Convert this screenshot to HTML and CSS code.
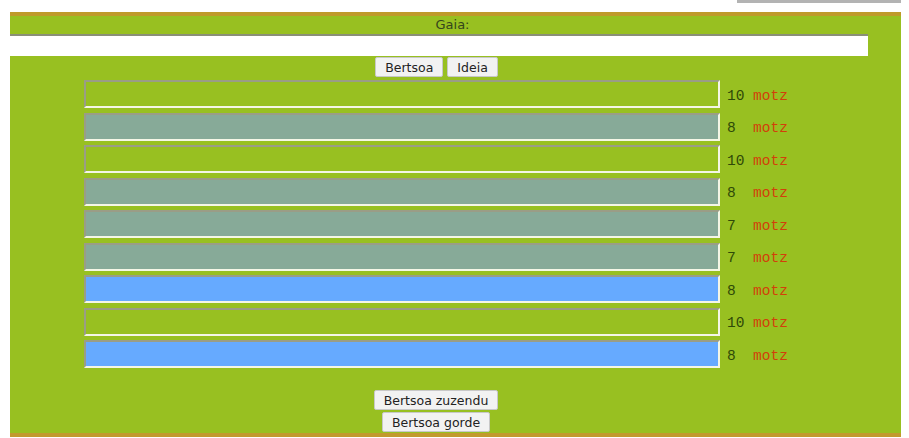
FILE: index.html
```html
<!DOCTYPE html>
<html lang="eu">
<head>
  <meta charset="UTF-8">
  <meta name="viewport" content="width=device-width, initial-scale=1.0">
  <title>Bertsoa</title>
  <link rel="stylesheet" href="styles.css">
</head>
<body>
  <div class="topbar"></div>
  <div class="panel">
    <div class="gaia-label">Gaia:</div>
    <input class="gaia" type="text">
    <div class="tools">
      <button>Bertsoa</button>
      <button>Ideia</button>
    </div>

    <div class="lines">
      <div class="line"><input class="verse" type="text"><span class="count">10 </span><span class="kind">motz</span></div>
      <div class="line"><input class="verse gray" type="text"><span class="count">8  </span><span class="kind">motz</span></div>
      <div class="line"><input class="verse" type="text"><span class="count">10 </span><span class="kind">motz</span></div>
      <div class="line"><input class="verse gray" type="text"><span class="count">8  </span><span class="kind">motz</span></div>
      <div class="line"><input class="verse gray" type="text"><span class="count">7  </span><span class="kind">motz</span></div>
      <div class="line"><input class="verse gray" type="text"><span class="count">7  </span><span class="kind">motz</span></div>
      <div class="line"><input class="verse blue" type="text"><span class="count">8  </span><span class="kind">motz</span></div>
      <div class="line"><input class="verse" type="text"><span class="count">10 </span><span class="kind">motz</span></div>
      <div class="line"><input class="verse blue" type="text"><span class="count">8  </span><span class="kind">motz</span></div>
    </div>

    <div class="actions">
      <button>Bertsoa zuzendu</button>
      <button>Bertsoa gorde</button>
    </div>
  </div>
</body>
</html>
```

FILE: styles.css
```css
body {
  margin: 0;
  padding: 0 8px 0 10px;
  background: #fff;
  font-family: "DejaVu Sans", Verdana, sans-serif;
}

.topbar {
  width: 164px;
  height: 3px;
  margin-left: auto;
  background: #b3b3b3;
}

.panel {
  margin-top: 9px;
  background: #98c021;
  border-top: 4px solid #bf9a2a;
  border-bottom: 4px solid #c29a2e;
  height: 425px;
  box-sizing: border-box;
}

.gaia-label {
  text-align: center;
  font-size: 13px;
  color: #34451c;
  height: 18px;
  line-height: 18px;
  padding-right: 6px;
}

.gaia {
  display: block;
  width: 858px;
  height: 22px;
  box-sizing: border-box;
  margin: 0;
  border: none;
  border-top: 2px solid #8a8f78;
  background: #fff;
}

.tools {
  display: flex;
  justify-content: center;
  gap: 4px;
  margin-top: 1px;
  padding-right: 38px;
}

button {
  font-family: "DejaVu Sans", Verdana, sans-serif;
  font-size: 12.5px;
  color: #222;
  background: #f2f2f2;
  border: 1px solid #c8c8c8;
  border-radius: 2px;
  height: 20px;
  padding: 0 9px;
}

.lines {
  display: flex;
  flex-direction: column;
  gap: 4.5px;
  margin-top: 3px;
  padding-left: 74px;
}

.line {
  display: flex;
  align-items: center;
  height: 28px;
  padding-top: 3px;
  box-sizing: border-box;
  font-family: "Liberation Mono", "Courier New", monospace;
  font-size: 14.5px;
  white-space: pre;
}

.verse {
  width: 636px;
  height: 28px;
  box-sizing: border-box;
  margin: -3px 7px 0 0;
  background: transparent;
  border: 2px solid;
  border-color: #9a9d86 #f4f6e6 #f4f6e6 #9a9d86;
}

.verse.gray {
  background: #87aa98;
}

.verse.blue {
  background: #66aaff;
}

.count {
  color: #2f4a08;
}

.kind {
  color: #d2400a;
}

.actions {
  display: flex;
  flex-direction: column;
  align-items: center;
  gap: 2px;
  margin-top: 22px;
  padding-right: 39px;
}
```
